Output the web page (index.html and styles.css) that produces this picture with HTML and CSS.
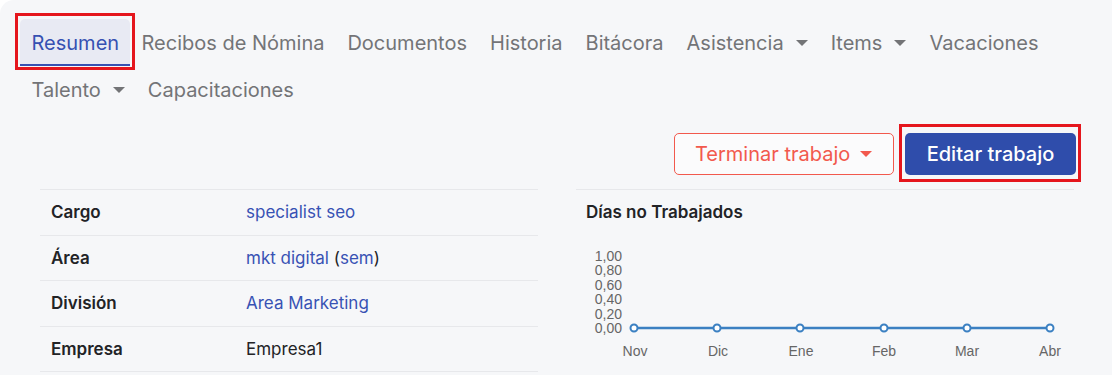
FILE: index.html
```html
<!DOCTYPE html>
<html lang="es">
<head>
<meta charset="utf-8">
<title>Resumen</title>
<link rel="stylesheet" href="styles.css">
</head>
<body>
<div class="page">
  <nav class="tabs">
    <a class="tab active">Resumen<span class="mark"></span></a>
    <a class="tab">Recibos de Nómina</a>
    <a class="tab">Documentos</a>
    <a class="tab">Historia</a>
    <a class="tab">Bitácora</a>
    <a class="tab">Asistencia <span class="caret"></span></a>
    <a class="tab">Items <span class="caret"></span></a>
    <a class="tab">Vacaciones</a>
    <a class="tab">Talento <span class="caret"></span></a>
    <a class="tab">Capacitaciones</a>
  </nav>

  <div class="actions">
    <button class="btn btn-outline">Terminar trabajo <span class="caret"></span></button>
    <button class="btn btn-primary">Editar trabajo<span class="mark mark-btn"></span></button>
  </div>

  <div class="content">
    <table class="info">
      <tr><th>Cargo</th><td><a class="link">specialist seo</a></td></tr>
      <tr><th>Área</th><td><a class="link">mkt digital</a> (<a class="link">sem</a>)</td></tr>
      <tr><th>División</th><td><a class="link">Area Marketing</a></td></tr>
      <tr><th>Empresa</th><td>Empresa1</td></tr>
    </table>

    <section class="chart-panel">
      <h3 class="chart-title">Días no Trabajados</h3>
      <svg class="chart" width="498" height="130" viewBox="0 0 498 130">
        <g class="ylabels">
          <text x="46" y="22">1,00</text>
          <text x="46" y="36">0,80</text>
          <text x="46" y="51">0,60</text>
          <text x="46" y="65">0,40</text>
          <text x="46" y="80">0,20</text>
          <text x="46" y="94">0,00</text>
        </g>
        <polyline class="line" points="58,89 141,89 224,89 308,89 391,89 474,89"/>
        <g class="pts">
          <circle cx="58" cy="89" r="3.5"/>
          <circle cx="141" cy="89" r="3.5"/>
          <circle cx="224" cy="89" r="3.5"/>
          <circle cx="308" cy="89" r="3.5"/>
          <circle cx="391" cy="89" r="3.5"/>
          <circle cx="474" cy="89" r="3.5"/>
        </g>
        <g class="xlabels">
          <text x="59" y="117">Nov</text>
          <text x="142" y="117">Dic</text>
          <text x="225" y="117">Ene</text>
          <text x="308" y="117">Feb</text>
          <text x="391" y="117">Mar</text>
          <text x="474" y="117">Abr</text>
        </g>
      </svg>
    </section>
  </div>
</div>
</body>
</html>
```

FILE: styles.css
```css
* { box-sizing: border-box; }
html, body { margin: 0; padding: 0; background: #ffffff; }
body { font-family: Inter, "Noto Sans", sans-serif; }

.page {
  width: 1112px;
  height: 375px;
  background: #f6f7f9;
  border-top-left-radius: 14px;
  overflow: hidden;
  padding: 19px 36px 0 20px;
}

.tabs {
  display: flex;
  flex-wrap: wrap;
  width: 1040px;
}
.tab {
  position: relative;
  display: flex;
  align-items: center;
  height: 47px;
  padding: 0 11.5px;
  font-size: 20px;
  color: #737477;
  white-space: nowrap;
}
.tab.active {
  color: #3651b2;
  background: #e8eaf3;
  border-radius: 5px 5px 0 0;
  border-bottom: 2px solid #3651b2;
  padding-top: 2px;
  width: 110px;
}
.caret {
  display: inline-block;
  width: 0; height: 0;
  margin-left: 12px;
  border-left: 6px solid transparent;
  border-right: 6px solid transparent;
  border-top: 6px solid currentColor;
}
.mark {
  position: absolute;
  left: -5px; top: -6px; right: -5px; bottom: -6px;
  border: 3px solid #e5161d;
  pointer-events: none;
}

.actions {
  display: flex;
  justify-content: flex-end;
  gap: 11px;
  margin-top: 20px;
}
.btn {
  position: relative;
  height: 42px;
  border-radius: 5px;
  font-family: Inter, "Noto Sans", sans-serif;
  font-size: 20px;
  display: flex;
  align-items: center;
  cursor: pointer;
}
.btn-outline {
  width: 220px;
  padding: 0 20px;
  background: #fbfbfc;
  color: #f2594d;
  border: 1px solid #f2594d;
}
.btn-outline .caret { margin-left: 10px; }
.btn-primary {
  width: 171px;
  justify-content: center;
  background: #2f4dab;
  color: #ffffff;
  border: 0;
  font-weight: 500;
}
.mark-btn { left: -6px; top: -9px; right: -5px; bottom: -7px; }

.content {
  display: grid;
  grid-template-columns: 498px 498px;
  column-gap: 38px;
  margin-top: 14px;
  margin-left: 20px;
}

.info {
  border-collapse: collapse;
  width: 498px;
  font-size: 17px;
}
.info tr { border-top: 1px solid #e7e8eb; border-bottom: 1px solid #e7e8eb; }
.info th, .info td {
  height: 45.5px;
  padding: 0 11px;
  text-align: left;
  vertical-align: middle;
  color: #222326;
}
.info th { width: 195px; font-weight: 600; }
.link { color: #3852b4; }

.chart-panel {
  border-top: 1px solid #e7e8eb;
}
.chart-title {
  margin: 11px 0 0 10px;
  font-size: 17px;
  font-weight: 600;
  color: #222326;
  line-height: 22px;
}
.chart { display: block; margin-top: 16px; }
.chart text {
  font-family: "Liberation Sans", Arial, sans-serif;
  font-size: 14px;
  fill: #666666;
}
.ylabels text { text-anchor: end; }
.xlabels text { text-anchor: middle; }
.line { fill: none; stroke: #3b80c2; stroke-width: 2.5; }
.pts circle { fill: #ffffff; stroke: #3b80c2; stroke-width: 2; }
```
